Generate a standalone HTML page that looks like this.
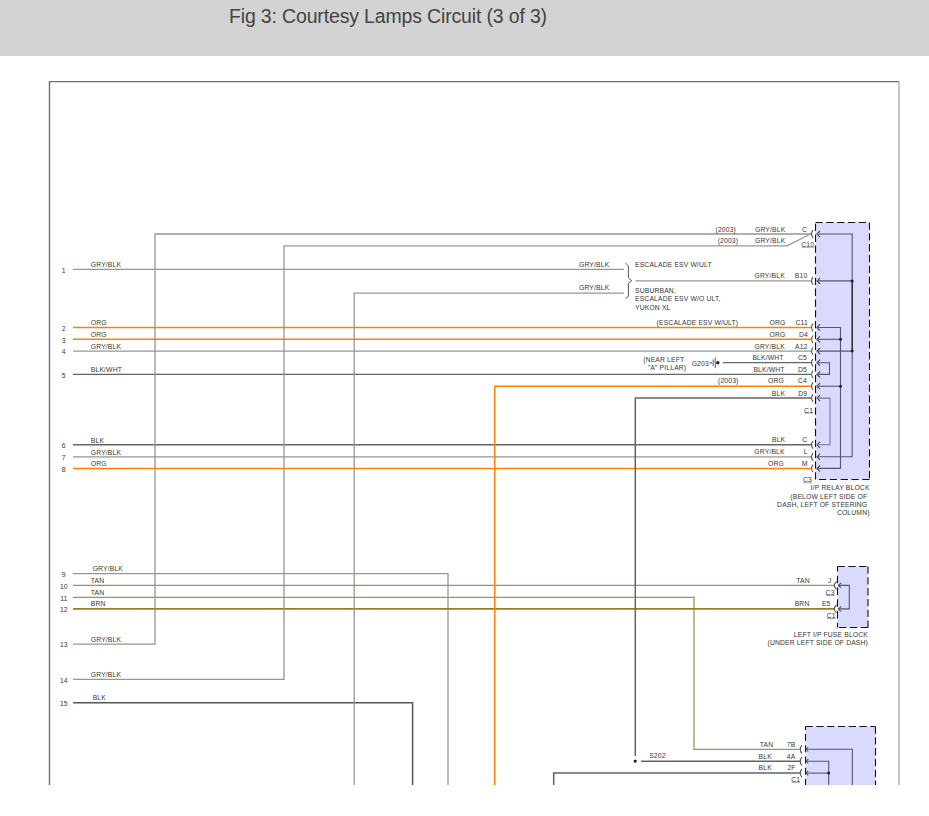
<!DOCTYPE html>
<html><head><meta charset="utf-8"><style>
html,body{margin:0;padding:0;background:#fff;width:929px;height:816px;overflow:hidden}
.hdr{position:absolute;left:0;top:0;width:929px;height:56px;background:#d3d3d3}
.title{position:absolute;left:229px;top:4.7px;font-family:"Liberation Sans",sans-serif;font-size:19.5px;color:#444;letter-spacing:-0.16px;white-space:nowrap}
svg{position:absolute;left:0;top:0}
svg text{font-family:"Liberation Sans",sans-serif;fill:#363636;letter-spacing:0.14px}
</style></head><body>
<div class="hdr"></div>
<div class="title">Fig 3: Courtesy Lamps Circuit (3 of 3)</div>
<svg width="929" height="816" viewBox="0 0 929 816">
<defs><clipPath id="cp"><rect x="0" y="0" width="929" height="785"/></clipPath></defs>
<g clip-path="url(#cp)">
<path d="M49.5,785 L49.5,81.6 L899,81.6" stroke="#6e6e6e" stroke-width="1.4" fill="none"/><path d="M899,81.6 L899,785" stroke="#a0a0a0" stroke-width="1.2" fill="none"/>
<rect x="815.5" y="222.5" width="54.0" height="257.0" fill="#dadaff"/>
<path d="M815.5,222.5 L869.5,222.5" stroke="#111" stroke-width="1.1" fill="none" stroke-dasharray="7.3 3.5"/>
<path d="M869.5,222.5 L869.5,479.5" stroke="#111" stroke-width="1.1" fill="none" stroke-dasharray="7.3 3.5"/>
<path d="M869.5,479.5 L815.5,479.5" stroke="#111" stroke-width="1.1" fill="none" stroke-dasharray="7.3 3.5"/>
<path d="M815.5,479.5 L815.5,222.5" stroke="#111" stroke-width="1.1" fill="none" stroke-dasharray="7.3 3.5"/>
<rect x="837.5" y="566.5" width="30.5" height="61.0" fill="#dadaff"/>
<path d="M837.5,566.5 L868,566.5" stroke="#111" stroke-width="1.1" fill="none" stroke-dasharray="7.3 3.5"/>
<path d="M868,566.5 L868,627.5" stroke="#111" stroke-width="1.1" fill="none" stroke-dasharray="7.3 3.5"/>
<path d="M868,627.5 L837.5,627.5" stroke="#111" stroke-width="1.1" fill="none" stroke-dasharray="7.3 3.5"/>
<path d="M837.5,566.5 L837.5,627.5" stroke="#111" stroke-width="1.1" fill="none" stroke-dasharray="7.5 4.25" stroke-dashoffset="2.47"/>
<rect x="805.5" y="726.5" width="70.0" height="73.5" fill="#dadaff"/>
<path d="M805.5,726.5 L875.5,726.5" stroke="#111" stroke-width="1.1" fill="none" stroke-dasharray="7.3 3.5"/>
<path d="M875.5,726.5 L875.5,800" stroke="#111" stroke-width="1.1" fill="none" stroke-dasharray="7.3 3.5"/>
<path d="M875.5,800 L805.5,800" stroke="#111" stroke-width="1.1" fill="none" stroke-dasharray="7.3 3.5"/>
<path d="M805.5,726.5 L805.5,800" stroke="#111" stroke-width="1.1" fill="none" stroke-dasharray="7 4.2" stroke-dashoffset="3.6"/>
<text x="63.8" y="272.59999999999997" text-anchor="middle" font-size="6.8">1</text>
<text x="90.8" y="267.09999999999997" font-size="6.8">GRY/BLK</text>
<text x="63.8" y="330.7" text-anchor="middle" font-size="6.8">2</text>
<text x="90.8" y="325.2" font-size="6.8">ORG</text>
<text x="63.8" y="342.5" text-anchor="middle" font-size="6.8">3</text>
<text x="90.8" y="337.0" font-size="6.8">ORG</text>
<text x="63.8" y="354.3" text-anchor="middle" font-size="6.8">4</text>
<text x="90.8" y="348.8" font-size="6.8">GRY/BLK</text>
<text x="63.8" y="377.59999999999997" text-anchor="middle" font-size="6.8">5</text>
<text x="90.8" y="372.09999999999997" font-size="6.8">BLK/WHT</text>
<text x="63.8" y="448.0" text-anchor="middle" font-size="6.8">6</text>
<text x="90.8" y="442.5" font-size="6.8">BLK</text>
<text x="63.8" y="460.0" text-anchor="middle" font-size="6.8">7</text>
<text x="90.8" y="454.5" font-size="6.8">GRY/BLK</text>
<text x="63.8" y="471.59999999999997" text-anchor="middle" font-size="6.8">8</text>
<text x="90.8" y="466.09999999999997" font-size="6.8">ORG</text>
<text x="63.8" y="576.9000000000001" text-anchor="middle" font-size="6.8">9</text>
<text x="92.7" y="571.4000000000001" font-size="6.8">GRY/BLK</text>
<text x="63.8" y="588.6" text-anchor="middle" font-size="6.8">10</text>
<text x="90.8" y="583.1" font-size="6.8">TAN</text>
<text x="63.8" y="600.5" text-anchor="middle" font-size="6.8">11</text>
<text x="90.8" y="595.0" font-size="6.8">TAN</text>
<text x="63.8" y="612.1" text-anchor="middle" font-size="6.8">12</text>
<text x="90.8" y="605.6" font-size="6.8">BRN</text>
<text x="63.8" y="647.4000000000001" text-anchor="middle" font-size="6.8">13</text>
<text x="90.8" y="641.9000000000001" font-size="6.8">GRY/BLK</text>
<text x="63.8" y="682.5" text-anchor="middle" font-size="6.8">14</text>
<text x="90.8" y="677.0" font-size="6.8">GRY/BLK</text>
<text x="63.8" y="705.9000000000001" text-anchor="middle" font-size="6.8">15</text>
<text x="92.7" y="700.4000000000001" font-size="6.8">BLK</text>
<path d="M73,269.4 L624,269.4" stroke="#969696" stroke-width="1.3" fill="none"/>
<path d="M73,327.5 L811,327.5" stroke="#ff8000" stroke-width="1.5" fill="none"/>
<path d="M73,339.3 L811,339.3" stroke="#ff8000" stroke-width="1.5" fill="none"/>
<path d="M73,351.1 L811,351.1" stroke="#969696" stroke-width="1.3" fill="none"/>
<path d="M73,374.4 L811,374.4" stroke="#646464" stroke-width="1.3" fill="none"/>
<path d="M73,444.8 L811,444.8" stroke="#646464" stroke-width="1.5" fill="none"/>
<path d="M73,456.8 L811,456.8" stroke="#969696" stroke-width="1.3" fill="none"/>
<path d="M73,468.4 L811,468.4" stroke="#ff8000" stroke-width="1.5" fill="none"/>
<path d="M73,573.7 L448,573.7 L448,790" stroke="#969696" stroke-width="1.3" fill="none"/>
<path d="M73,585.4 L835,585.4" stroke="#aa9050" stroke-width="1.3" fill="none"/>
<path d="M73,597.3 L694,597.3 L694,749.3 L800,749.3" stroke="#aa9050" stroke-width="1.3" fill="none"/>
<path d="M73,608.9 L835,608.9" stroke="#9a7b2a" stroke-width="1.7" fill="none"/>
<path d="M73,644.2 L155,644.2 L155,234 L811,234" stroke="#969696" stroke-width="1.3" fill="none"/>
<path d="M73,679.3 L284.0,679.3 L284.0,245.8 L787.2,245.8 L810.5,234" stroke="#969696" stroke-width="1.3" fill="none"/>
<path d="M73,702.7 L412.6,702.7 L412.6,790" stroke="#555555" stroke-width="1.5" fill="none"/>
<path d="M354.2,790 L354.2,293.1 L624,293.1" stroke="#969696" stroke-width="1.3" fill="none"/>
<path d="M494.8,790 L494.8,386.2 L811,386.2" stroke="#ff8000" stroke-width="1.5" fill="none"/>
<path d="M635.3,756 L635.3,398.1 L811,398.1" stroke="#646464" stroke-width="1.5" fill="none"/>
<path d="M635.5,280.9 L811,280.9" stroke="#969696" stroke-width="1.3" fill="none"/>
<path d="M723,362.7 L811,362.7" stroke="#646464" stroke-width="1.3" fill="none"/>
<path d="M641,761.3 L800,761.2" stroke="#646464" stroke-width="1.5" fill="none"/>
<path d="M553.7,790 L553.7,773.1 L800,773.1" stroke="#646464" stroke-width="1.5" fill="none"/>
<circle cx="635.2" cy="761.1" r="1.6" fill="#222"/>
<path d="M625.5,263.1 Q628.4,265 628.4,267 L628.4,277.9 L631.7,280.8 L628.4,283.4 L628.4,295.7 Q628.4,297 625.5,298.6" stroke="#555" stroke-width="1" fill="none"/>
<path d="M813.0,230.2 Q810.1,234 813.0,237.8" stroke="#505050" stroke-width="1.1" fill="none"/>
<path d="M820.05,230.95 L817,234 L820.05,237.05" stroke="#3a3a48" stroke-width="1.05" fill="none"/>
<path d="M813.0,277.09999999999997 Q810.1,280.9 813.0,284.7" stroke="#505050" stroke-width="1.1" fill="none"/>
<path d="M820.05,277.84999999999997 L817,280.9 L820.05,283.95" stroke="#3a3a48" stroke-width="1.05" fill="none"/>
<path d="M813.0,323.7 Q810.1,327.5 813.0,331.3" stroke="#505050" stroke-width="1.1" fill="none"/>
<path d="M820.05,324.45 L817,327.5 L820.05,330.55" stroke="#3a3a48" stroke-width="1.05" fill="none"/>
<path d="M813.0,335.5 Q810.1,339.3 813.0,343.1" stroke="#505050" stroke-width="1.1" fill="none"/>
<path d="M820.05,336.25 L817,339.3 L820.05,342.35" stroke="#3a3a48" stroke-width="1.05" fill="none"/>
<path d="M813.0,347.3 Q810.1,351.1 813.0,354.90000000000003" stroke="#505050" stroke-width="1.1" fill="none"/>
<path d="M820.05,348.05 L817,351.1 L820.05,354.15000000000003" stroke="#3a3a48" stroke-width="1.05" fill="none"/>
<path d="M813.0,358.9 Q810.1,362.7 813.0,366.5" stroke="#505050" stroke-width="1.1" fill="none"/>
<path d="M820.05,359.65 L817,362.7 L820.05,365.75" stroke="#3a3a48" stroke-width="1.05" fill="none"/>
<path d="M813.0,370.59999999999997 Q810.1,374.4 813.0,378.2" stroke="#505050" stroke-width="1.1" fill="none"/>
<path d="M820.05,371.34999999999997 L817,374.4 L820.05,377.45" stroke="#3a3a48" stroke-width="1.05" fill="none"/>
<path d="M813.0,382.4 Q810.1,386.2 813.0,390.0" stroke="#505050" stroke-width="1.1" fill="none"/>
<path d="M820.05,383.15 L817,386.2 L820.05,389.25" stroke="#3a3a48" stroke-width="1.05" fill="none"/>
<path d="M813.0,394.3 Q810.1,398.1 813.0,401.90000000000003" stroke="#505050" stroke-width="1.1" fill="none"/>
<path d="M820.05,395.05 L817,398.1 L820.05,401.15000000000003" stroke="#3a3a48" stroke-width="1.05" fill="none"/>
<path d="M813.0,441.0 Q810.1,444.8 813.0,448.6" stroke="#505050" stroke-width="1.1" fill="none"/>
<path d="M820.05,441.75 L817,444.8 L820.05,447.85" stroke="#3a3a48" stroke-width="1.05" fill="none"/>
<path d="M813.0,453.0 Q810.1,456.8 813.0,460.6" stroke="#505050" stroke-width="1.1" fill="none"/>
<path d="M820.05,453.75 L817,456.8 L820.05,459.85" stroke="#3a3a48" stroke-width="1.05" fill="none"/>
<path d="M813.0,464.59999999999997 Q810.1,468.4 813.0,472.2" stroke="#505050" stroke-width="1.1" fill="none"/>
<path d="M820.05,465.34999999999997 L817,468.4 L820.05,471.45" stroke="#3a3a48" stroke-width="1.05" fill="none"/>
<path d="M817,234 L852.2,234 L852.2,456.8 L817,456.8" stroke="#55556a" stroke-width="1.1" fill="none"/>
<path d="M817,280.9 L852.2,280.9" stroke="#55556a" stroke-width="1.1" fill="none"/>
<path d="M817,351.1 L852.2,351.1" stroke="#55556a" stroke-width="1.1" fill="none"/>
<path d="M817,327.5 L840.5,327.5 L840.5,468.4 L817,468.4" stroke="#55556a" stroke-width="1.1" fill="none"/>
<path d="M817,339.3 L840.5,339.3" stroke="#55556a" stroke-width="1.1" fill="none"/>
<path d="M817,386.2 L840.5,386.2" stroke="#55556a" stroke-width="1.1" fill="none"/>
<path d="M817,362.7 L829.5,362.7 L829.5,374.4 L817,374.4" stroke="#55556a" stroke-width="1.1" fill="none"/>
<path d="M817,398.1 L830,398.1 L830,444.8 L817,444.8" stroke="#777790" stroke-width="1.1" fill="none"/>
<path d="M852.2,280.9 L852.2,351.1" stroke="#222" stroke-width="1.2" fill="none"/>
<circle cx="852.2" cy="280.9" r="1.5" fill="#222"/>
<circle cx="852.2" cy="351.1" r="1.5" fill="#222"/>
<circle cx="840.5" cy="339.3" r="1.5" fill="#222"/>
<circle cx="840.5" cy="386.2" r="1.5" fill="#222"/>
<path d="M836.6,581.5 Q832.0,585.4 836.6,589.3" stroke="#505050" stroke-width="1.1" fill="none"/>
<path d="M841.1,582.8 L838.5,585.4 L841.1,588.0" stroke="#444455" stroke-width="1.05" fill="none"/>
<path d="M836.6,605.0 Q832.0,608.9 836.6,612.8" stroke="#505050" stroke-width="1.1" fill="none"/>
<path d="M841.1,606.3 L838.5,608.9 L841.1,611.5" stroke="#444455" stroke-width="1.05" fill="none"/>
<path d="M838.5,585.4 L849.3,585.4 L849.3,608.9 L838.5,608.9" stroke="#55556a" stroke-width="1.1" fill="none"/>
<path d="M802.0,745.0 Q798.5,749.3 802.0,753.5999999999999" stroke="#505050" stroke-width="1.1" fill="none"/>
<path d="M808.2,747.0999999999999 L806,749.3 L808.2,751.5" stroke="#555566" stroke-width="1.05" fill="none"/>
<path d="M802.0,757.0 Q798.5,761.3 802.0,765.5999999999999" stroke="#505050" stroke-width="1.1" fill="none"/>
<path d="M808.2,759.0999999999999 L806,761.3 L808.2,763.5" stroke="#555566" stroke-width="1.05" fill="none"/>
<path d="M802.0,768.8000000000001 Q798.5,773.1 802.0,777.4" stroke="#505050" stroke-width="1.1" fill="none"/>
<path d="M808.2,770.9 L806,773.1 L808.2,775.3000000000001" stroke="#555566" stroke-width="1.05" fill="none"/>
<path d="M806,749.3 L852.3,749.3 L852.3,790" stroke="#55556a" stroke-width="1.1" fill="none"/>
<path d="M806,761.2 L828.7,761.2 L828.7,790" stroke="#55556a" stroke-width="1.1" fill="none"/>
<path d="M806,773.1 L828.7,773.1" stroke="#55556a" stroke-width="1.1" fill="none"/>
<circle cx="828.7" cy="773.1" r="1.5" fill="#222"/>
<circle cx="711" cy="362.8" r="0.9" fill="#555"/>
<path d="M713.2,359.6 L713.2,366.2" stroke="#777" stroke-width="1.2" fill="none"/>
<path d="M715.3,357.6 L715.3,368.2" stroke="#777" stroke-width="1.2" fill="none"/>
<circle cx="717.8" cy="362.8" r="1.75" fill="#222"/>
<text x="715.5" y="232" font-size="6.8">(2003)</text>
<text x="755" y="232" font-size="6.8">GRY/BLK</text>
<text x="802" y="232" font-size="6.8">C</text>
<text x="717.7" y="243" font-size="6.8">(2003)</text>
<text x="755" y="243" font-size="6.8">GRY/BLK</text>
<path d="M801.5999999999999,247.2 L814.0999999999999,247.2" stroke="#8a8a8a" stroke-width="0.8"/>
<text x="801.3" y="246.7" font-size="6.8">C10</text>
<text x="579" y="266.8" font-size="6.8">GRY/BLK</text>
<text x="635" y="267" font-size="6.8">ESCALADE ESV W/ULT</text>
<text x="754.5" y="278" font-size="6.8">GRY/BLK</text>
<text x="794.8" y="278" font-size="6.8">B10</text>
<text x="579" y="289.8" font-size="6.8">GRY/BLK</text>
<text x="635" y="293.4" font-size="6.8">SUBURBAN,</text>
<text x="635" y="301" font-size="6.8">ESCALADE ESV W/O ULT,</text>
<text x="635" y="309.8" font-size="6.8">YUKON XL</text>
<text x="656.6" y="324.9" font-size="6.8">(ESCALADE ESV W/ULT)</text>
<text x="769.6" y="324.9" font-size="6.8">ORG</text>
<text x="795.5" y="324.9" font-size="6.8">C11</text>
<text x="769.6" y="336.5" font-size="6.8">ORG</text>
<text x="799" y="336.5" font-size="6.8">D4</text>
<text x="754.5" y="348.6" font-size="6.8">GRY/BLK</text>
<text x="795" y="348.6" font-size="6.8">A12</text>
<text x="643.2" y="361.6" font-size="6.8">(NEAR LEFT</text>
<text x="647.8" y="369.9" font-size="6.8">"A" PILLAR)</text>
<text x="691.7" y="365.6" font-size="6.8">G203</text>
<text x="752.4" y="359.8" font-size="6.8">BLK/WHT</text>
<text x="798" y="359.8" font-size="6.8">C5</text>
<text x="753.4" y="371.6" font-size="6.8">BLK/WHT</text>
<text x="798" y="371.6" font-size="6.8">D5</text>
<text x="718" y="383.3" font-size="6.8">(2003)</text>
<text x="768" y="383.3" font-size="6.8">ORG</text>
<text x="798" y="383.3" font-size="6.8">C4</text>
<text x="771.8" y="396" font-size="6.8">BLK</text>
<text x="798.2" y="396" font-size="6.8">D9</text>
<path d="M804.4,413.1 L813.1,413.1" stroke="#8a8a8a" stroke-width="0.8"/>
<text x="804.1" y="412.6" font-size="6.8">C1</text>
<text x="772" y="441.8" font-size="6.8">BLK</text>
<text x="802.2" y="441.8" font-size="6.8">C</text>
<text x="784.7" y="454.2" text-anchor="end" font-size="6.8">GRY/BLK</text>
<text x="803.8" y="454.2" font-size="6.8">L</text>
<text x="768" y="465.6" font-size="6.8">ORG</text>
<text x="801.7" y="465.6" font-size="6.8">M</text>
<path d="M803.3,482.8 L812.0,482.8" stroke="#8a8a8a" stroke-width="0.8"/>
<text x="803" y="482.3" font-size="6.8">C3</text>
<text x="869.6" y="489.5" text-anchor="end" font-size="6.8">I/P RELAY BLOCK</text>
<text x="867.3" y="498.6" text-anchor="end" font-size="6.8">(BELOW LEFT SIDE OF</text>
<text x="867.3" y="506.6" text-anchor="end" font-size="6.8">DASH, LEFT OF STEERING</text>
<text x="869.6" y="515" text-anchor="end" font-size="6.8">COLUMN)</text>
<text x="796.3" y="582.8" font-size="6.8">TAN</text>
<text x="828" y="582.8" font-size="6.8">J</text>
<path d="M825.9,595.5 L834.6,595.5" stroke="#8a8a8a" stroke-width="0.8"/>
<text x="825.6" y="595" font-size="6.8">C3</text>
<text x="794.7" y="605.9" font-size="6.8">BRN</text>
<text x="821.9" y="605.9" font-size="6.8">E5</text>
<path d="M827.0,618.5 L835.7,618.5" stroke="#8a8a8a" stroke-width="0.8"/>
<text x="826.7" y="618" font-size="6.8">C1</text>
<text x="868" y="636.5" text-anchor="end" font-size="6.8">LEFT I/P FUSE BLOCK</text>
<text x="868" y="644.6" text-anchor="end" font-size="6.8">(UNDER LEFT SIDE OF DASH)</text>
<text x="759.8" y="746.9" font-size="6.8">TAN</text>
<text x="786.8" y="746.9" font-size="6.8">7B</text>
<text x="649.2" y="758" font-size="6.8">S202</text>
<text x="758.6" y="758.6" font-size="6.8">BLK</text>
<text x="786.8" y="758.6" font-size="6.8">4A</text>
<text x="758.6" y="769.8" font-size="6.8">BLK</text>
<text x="787.4" y="769.8" font-size="6.8">2F</text>
<path d="M791.5,782.3 L800.2,782.3" stroke="#8a8a8a" stroke-width="0.8"/>
<text x="791.2" y="781.8" font-size="6.8">C1</text>
</g>
</svg>
</body></html>
